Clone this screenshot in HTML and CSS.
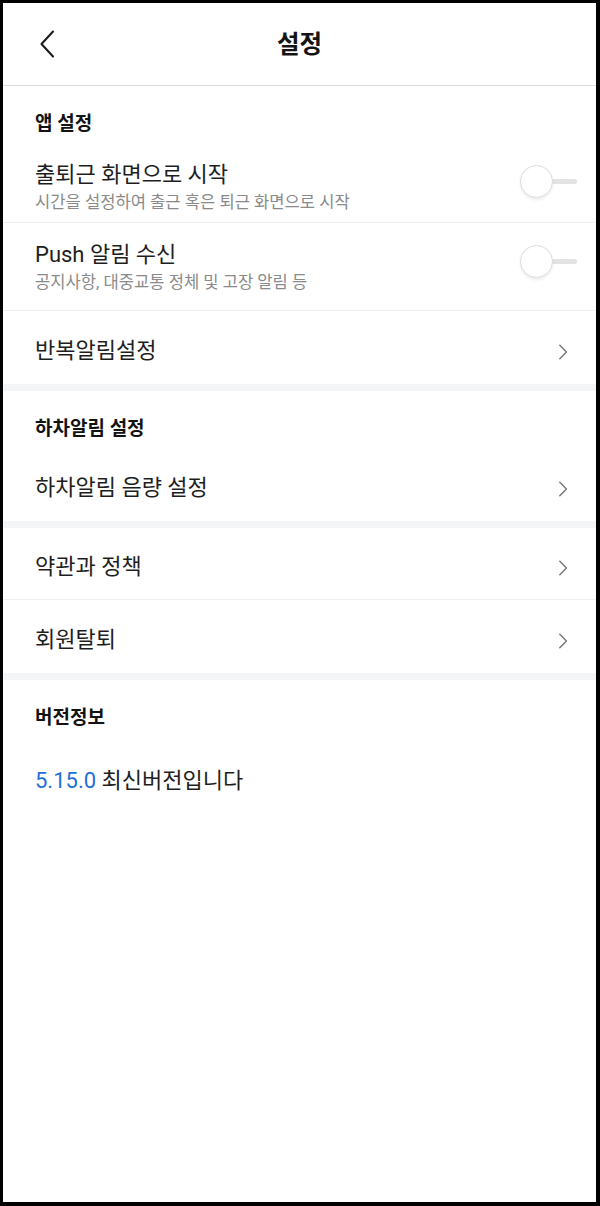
FILE: index.html
```html
<!DOCTYPE html>
<html lang="ko">
<head>
<meta charset="utf-8">
<title>설정</title>
<link rel="stylesheet" href="styles.css">
</head>
<body>
<div class="frame">
  <header class="topbar">
    <div class="topbar-side topbar-left">
      <svg class="back" width="16" height="28" viewBox="0 0 16 28" aria-hidden="true">
        <path d="M14 1.5 L2.5 14 L14 26.5" fill="none" stroke="#1c1c1c" stroke-width="2.1" stroke-linecap="round" stroke-linejoin="round"/>
      </svg>
    </div>
    <h1 class="topbar-title">설정</h1>
    <div class="topbar-side"></div>
  </header>

  <section class="group">
    <div class="group-title">앱 설정</div>
    <div class="row row-toggle row-first divided">
      <div class="row-text">
        <div class="row-label">출퇴근 화면으로 시작</div>
        <div class="row-sub">시간을 설정하여 출근 혹은 퇴근 화면으로 시작</div>
      </div>
      <div class="toggle"><span class="knob"></span></div>
    </div>
    <div class="row row-toggle divided">
      <div class="row-text">
        <div class="row-label">Push 알림 수신</div>
        <div class="row-sub">공지사항, 대중교통 정체 및 고장 알림 등</div>
      </div>
      <div class="toggle"><span class="knob"></span></div>
    </div>
    <div class="row row-link">
      <div class="row-label">반복알림설정</div>
      <svg class="chev" width="10" height="16" viewBox="0 0 10 16" aria-hidden="true"><path d="M1.8 1.2 L8.4 8 L1.8 14.8" fill="none" stroke="#7a7a7a" stroke-width="1.5" stroke-linecap="round" stroke-linejoin="round"/></svg>
    </div>
  </section>

  <div class="band"></div>

  <section class="group">
    <div class="group-title">하차알림 설정</div>
    <div class="row row-link">
      <div class="row-label">하차알림 음량 설정</div>
      <svg class="chev" width="10" height="16" viewBox="0 0 10 16" aria-hidden="true"><path d="M1.8 1.2 L8.4 8 L1.8 14.8" fill="none" stroke="#7a7a7a" stroke-width="1.5" stroke-linecap="round" stroke-linejoin="round"/></svg>
    </div>
  </section>

  <div class="band"></div>

  <section class="group">
    <div class="row row-link divided">
      <div class="row-label">약관과 정책</div>
      <svg class="chev" width="10" height="16" viewBox="0 0 10 16" aria-hidden="true"><path d="M1.8 1.2 L8.4 8 L1.8 14.8" fill="none" stroke="#7a7a7a" stroke-width="1.5" stroke-linecap="round" stroke-linejoin="round"/></svg>
    </div>
    <div class="row row-link">
      <div class="row-label">회원탈퇴</div>
      <svg class="chev" width="10" height="16" viewBox="0 0 10 16" aria-hidden="true"><path d="M1.8 1.2 L8.4 8 L1.8 14.8" fill="none" stroke="#7a7a7a" stroke-width="1.5" stroke-linecap="round" stroke-linejoin="round"/></svg>
    </div>
  </section>

  <div class="band"></div>

  <section class="group">
    <div class="group-title">버전정보</div>
    <div class="version"><span class="ver-num">5.15.0</span> 최신버전입니다</div>
  </section>
</div>
</body>
</html>
```

FILE: styles.css
```css
* { box-sizing: border-box; }

html, body {
  margin: 0;
  padding: 0;
  background: #000;
}

body {
  font-family: Roboto, "Noto Sans CJK KR", "Noto Sans", sans-serif;
  color: #1e1e1e;
}

.frame {
  min-height: 1206px;
  background: #fff;
  border-style: solid;
  border-color: #000;
  border-width: 3px 4px 4px 3px;
}

.topbar {
  height: 83px;
  display: grid;
  grid-template-columns: 1fr auto 1fr;
  align-items: center;
  border-bottom: 1px solid #dcdcdc;
  padding-top: 2px;
  padding-bottom: 1px;
}

.topbar-side {
  display: flex;
  align-items: center;
}

.topbar-left {
  padding-left: 36px;
  margin-top: -2px;
}

.back { display: block; }

.topbar-title {
  margin: 0;
  font-size: 24.5px;
  font-weight: 700;
  line-height: 30px;
  color: #141414;
}

.group-title {
  padding: 26px 32px 7px;
  font-size: 19px;
  font-weight: 700;
  line-height: 24px;
  color: #131313;
}

.row {
  display: flex;
  padding-left: 32px;
  padding-right: 19px;
}

.divided { border-bottom: 1px solid #f0f0f0; }

.row-label {
  font-size: 22px;
  line-height: 28px;
  color: #1e1e1e;
}

.row-toggle {
  align-items: flex-start;
  justify-content: space-between;
  padding-top: 18px;
  padding-bottom: 17px;
}

.row-first { padding-bottom: 9px; }

.row-sub {
  margin-top: 4px;
  font-size: 16.6px;
  line-height: 20px;
  color: #8a8a8a;
}

.row-link {
  align-items: center;
  justify-content: space-between;
  padding-top: 26px;
  padding-bottom: 19px;
}

.row-link.divided {
  padding-top: 25px;
  padding-bottom: 18px;
}

.chev {
  display: block;
  margin-right: 9px;
  margin-top: 1px;
}

.toggle {
  position: relative;
  width: 57px;
  height: 33px;
  margin-top: 4px;
  flex: none;
}

.toggle::before {
  content: "";
  position: absolute;
  left: 12px;
  right: 0;
  top: 14px;
  height: 5px;
  border-radius: 3px;
  background: #e3e3e3;
}

.knob {
  position: absolute;
  left: 0;
  top: 0;
  width: 33px;
  height: 33px;
  border-radius: 50%;
  background: #fff;
  border: 1px solid #dcdcdc;
  box-shadow: 0 2px 3px rgba(0, 0, 0, 0.07);
}

.band {
  height: 7px;
  background: #f4f5f7;
}

.version {
  padding: 30px 32px 0;
  font-size: 22px;
  line-height: 28px;
  color: #1e1e1e;
}

.ver-num { color: #1f6fd6; }
```
